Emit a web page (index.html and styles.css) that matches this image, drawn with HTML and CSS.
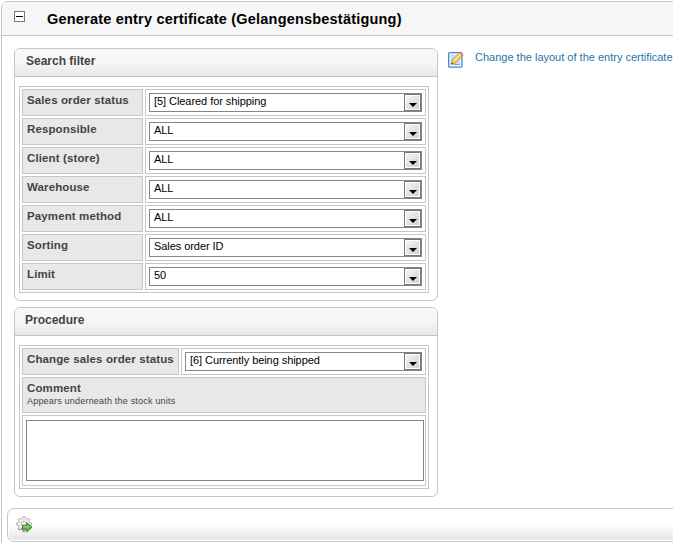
FILE: index.html
```
<!DOCTYPE html>
<html lang="en">
<head>
<meta charset="utf-8">
<title>Generate entry certificate</title>
<link rel="stylesheet" href="styles.css">
</head>
<body>
<main class="window">
  <header class="window-header">
    <svg class="collapse" width="11" height="11" viewBox="0 0 11 11" shape-rendering="crispEdges"><rect x=".5" y=".5" width="10" height="10" fill="#fff" stroke="#777"/><path d="M2 5.5h7" stroke="#000"/></svg>
    <h1>Generate entry certificate (Gelangensbestätigung)</h1>
  </header>
  <div class="content">
    <div class="panels">
      <section class="panel filter">
        <h2>Search filter</h2>
        <table>
          <tr><th>Sales order status</th><td><div class="select"><span>[5] Cleared for shipping</span><i></i></div></td></tr>
          <tr><th>Responsible</th><td><div class="select"><span>ALL</span><i></i></div></td></tr>
          <tr><th>Client (store)</th><td><div class="select"><span>ALL</span><i></i></div></td></tr>
          <tr><th>Warehouse</th><td><div class="select"><span>ALL</span><i></i></div></td></tr>
          <tr><th>Payment method</th><td><div class="select"><span>ALL</span><i></i></div></td></tr>
          <tr><th>Sorting</th><td><div class="select"><span>Sales order ID</span><i></i></div></td></tr>
          <tr><th>Limit</th><td><div class="select"><span>50</span><i></i></div></td></tr>
        </table>
      </section>
      <section class="panel procedure">
        <h2>Procedure</h2>
        <table>
          <tr><th>Change sales order status</th><td><div class="select"><span>[6] Currently being shipped</span><i></i></div></td></tr>
          <tr class="comment"><th colspan="2">Comment<small>Appears underneath the stock units</small></th></tr>
          <tr class="entry"><td colspan="2"><textarea></textarea></td></tr>
        </table>
      </section>
    </div>
    <a class="layout-link">
      <svg width="16" height="18" viewBox="0 0 16 18"><rect x=".7" y="2.6" width="13.2" height="14.6" rx="1" fill="#fff" stroke="#4585cf" stroke-width="1.3"/><path d="M2.5 4.5h9.7v10.8H2.5z" fill="#c5e0f7"/><path d="M6 14.5h6" stroke="#6ba8e8"/><path d="M3.2 14.2 4.5 10 11.7 2.8l3 2.9-7.2 7.2z" fill="#f5cf60" stroke="#b57b28" stroke-width=".8"/><path d="M5.5 11 12.5 4" stroke="#fff0a4" stroke-width="1.2"/><path d="m11.3 3.2 1.2-1.1 2.8 2.7-1.2 1.2z" fill="#e4a184" stroke="#b27358" stroke-width=".5"/><path d="m3 14.4.6-2 1.4 1.4z" fill="#443b30"/></svg>
      <span>Change the layout of the entry certificate</span>
    </a>
  </div>
  <footer class="actions">
    <svg width="17" height="17" viewBox="0 0 17 17">
      <path d="M6.9.6h2.2l.4 2 1.2.5L12.5 2 14 3.5l-1.1 1.8.5 1.2 2.1.4V9l-2.1.4-.5 1.2 1.1 1.8-1.5 1.5-1.8-1.1-1.2.5-.4 2.1H6.9l-.4-2.1-1.2-.5-1.8 1.1L2 12.4l1.1-1.8-.5-1.2-2-.4V6.900l2-.4.5-1.200L2 3.500 3.500 2l1.800 1.100 1.200-.500z" fill="#ececec" stroke="#a6a6a6" stroke-width=".8"/>
      <circle cx="8" cy="8" r="2.500" fill="#fff" stroke="#aaa" stroke-width=".8"/>
      <path d="M2 12.400l1.500 1.500 1.800-1.100 1.200.500.400 2.100h2.200" fill="none" stroke="#707070" stroke-width=".8"/>
      <path d="M6.500 9.200h4.200V6.800l5.300 4.500-5.300 4.500v-2.500H6.500z" fill="#72b94c" stroke="#347d20"/><path d="M7.500 10.600h5" stroke="#a9d68c"/>
    </svg>
  </footer>
</main>
</body>
</html>
```

FILE: styles.css
```
* { box-sizing: border-box; }
body {
  margin: 0;
  height: 543px;
  overflow: hidden;
  background: #fff;
  color: #444;
  font: 11px/13px "Liberation Sans", Arial, sans-serif;
}
.window {
  width: 690px;
  height: 560px;
  margin: 1px 0 0 1px;
  border: 1px solid #c6c6c6;
  border-radius: 6px;
}
.window-header {
  display: flex;
  height: 34px;
  padding: 9px 0 0 12px;
  border-bottom: 1px solid #c6c6c6;
  border-radius: 5px 5px 0 0;
  background: #f6f6f6;
}
.collapse { flex: none; margin-right: 22px; }
h1 {
  margin: 0;
  color: #000;
  font-size: 14.5px;
  line-height: 16px;
  letter-spacing: .2px;
  white-space: nowrap;
}
.content { display: flex; padding: 12px 0 0 12px; }
.panels { flex: none; width: 424px; }
.panel {
  border: 1px solid #c6c6c6;
  border-radius: 6px;
}
.filter { height: 253px; margin-bottom: 6px; }
.procedure { height: 190px; }
h2 {
  height: 28px;
  margin: 0 0 9px;
  padding: 5px 11px;
  border-bottom: 1px solid #c6c6c6;
  border-radius: 5px 5px 0 0;
  background: linear-gradient(#f7f7f7 0 45%, #e8e8e8);
  font-size: 12px;
  line-height: 14px;
}
.procedure h2 { padding-left: 10px; }
table {
  width: 410px;
  margin-left: 4px;
  border: 1px solid #c6c6c6;
  border-collapse: separate;
  border-spacing: 2px;
  table-layout: fixed;
}
th, td {
  height: 27px;
  border: 1px solid #c6c6c6;
  text-align: left;
  vertical-align: top;
}
th {
  width: 121px;
  padding: 4px 0 0 4px;
  background: #e8e8e8;
  font-size: 11.5px;
  letter-spacing: .12px;
  white-space: nowrap;
}
td { padding: 3px; }
.procedure th { width: 157px; }
.select {
  display: flex;
  justify-content: space-between;
  height: 19px;
  border: 1px solid #858585;
  color: #000;
  letter-spacing: -.06px;
}
.select span { padding: 1px 0 0 4px; }
.select i {
  display: flex;
  align-items: center;
  justify-content: center;
  width: 17px;
  height: 17px;
  border: 1px solid #777;
  background: linear-gradient(135deg, #f7f7f7, #cecece);
  box-shadow: inset 0 0 0 1px #fff;
}
.select i::after {
  content: "";
  margin-top: 4px;
  border: 4px solid transparent;
  border-top-color: #000;
  border-bottom: 0;
}
.comment th { height: 36px; }
small {
  display: block;
  margin-top: 1px;
  font-size: 9px;
  font-weight: normal;
  line-height: 11px;
  letter-spacing: .2px;
}
.entry td { height: 71px; padding: 4px 1px 4px 3px; }
textarea {
  display: block;
  width: 398px;
  height: 61px;
  margin: 0;
  border: 1px solid #858585;
  border-radius: 0;
  background: #fff;
  resize: none;
}
.layout-link {
  display: flex;
  gap: 11px;
  padding: 2px 0 0 10px;
  color: #1c76ae;
  white-space: nowrap;
}
.layout-link span { padding-top: 1px; }
.actions {
  height: 34px;
  margin: 11px 0 0 5px;
  padding: 7px 0 0 8px;
  border: 1px solid #c6c6c6;
  border-radius: 7px;
  background: linear-gradient(#fff 48%, #e3e3e3);
  box-shadow: inset 0 0 0 1px #fff;
}
```
